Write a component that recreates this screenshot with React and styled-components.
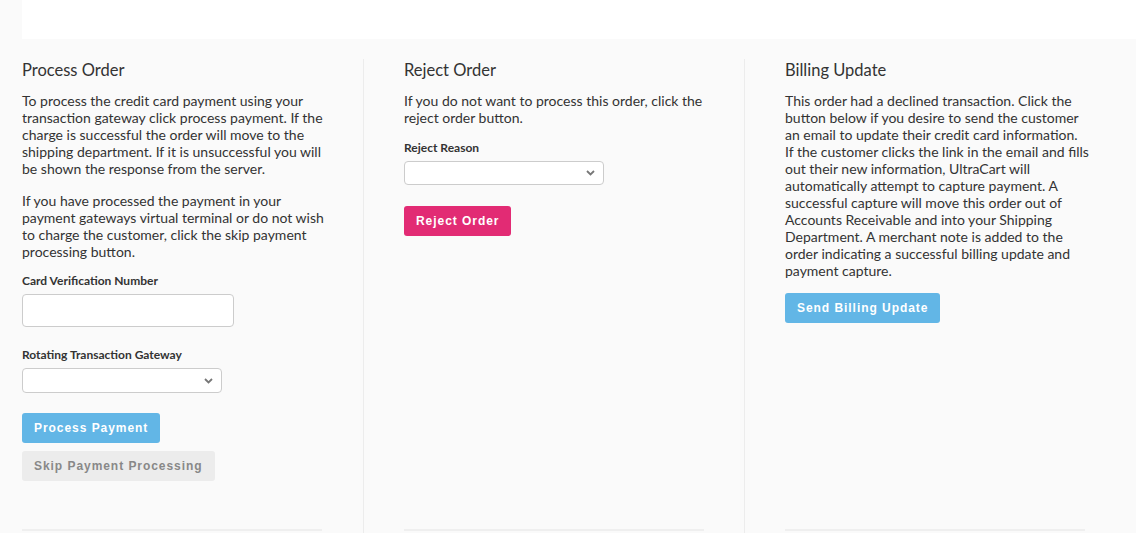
import React from 'react';
import styled, { createGlobalStyle } from 'styled-components';

const GlobalStyle = createGlobalStyle`
  html, body {
    margin: 0;
    padding: 0;
    background: #fafafa;
    font-family: Lato, "Open Sans", sans-serif;
    color: #333;
  }
`;

const Page = styled.div`
  padding: 0 0 0 22px;
  height: 533px;
  overflow: hidden;
`;

const TopBar = styled.div`
  height: 39px;
  background: #fff;
  margin-bottom: 20px;
`;

const Columns = styled.div`
  display: grid;
  grid-template-columns: 341px 381px 381px;
`;

const Column = styled.div`
  box-sizing: border-box;
  padding: ${p => (p.$first ? '0 36px 0 0' : '0 36px 0 40px')};
  border-left: ${p => (p.$first ? 'none' : '1px solid #ececec')};
  height: 474px;
  display: flex;
  flex-direction: column;
`;

const Heading = styled.h3`
  margin: 0 0 11px;
  font-size: 16.5px;
  font-weight: 400;
  line-height: 22px;
  color: #333;
`;

const Text = styled.p`
  margin: 0 0 ${p => p.$mb ?? 15}px;
  font-size: 14px;
  line-height: 17px;
  color: #333;
`;

const Label = styled.label`
  display: block;
  margin: 0 0 6px;
  font-size: 12px;
  font-weight: 700;
  line-height: 15px;
  color: #333;
`;

const Input = styled.input`
  display: block;
  box-sizing: border-box;
  width: 212px;
  height: 33px;
  border: 1px solid #ccc;
  border-radius: 4px;
  background: #fff;
  margin: 0 0 20px;
`;

const SelectWrap = styled.div`
  position: relative;
  width: 200px;
  margin: 0 0 ${p => p.$mb ?? 20}px;
`;

const Select = styled.select`
  display: block;
  box-sizing: border-box;
  width: 200px;
  height: ${p => p.$h || 25}px;
  border: 1px solid #ccc;
  border-radius: 4px;
  background: #fff;
  appearance: none;
  -webkit-appearance: none;
`;

const Chevron = styled.svg`
  position: absolute;
  right: 9px;
  top: 50%;
  margin-top: -3px;
  pointer-events: none;
`;

const COLORS = {
  blue: { bg: '#62b6e6', fg: '#fff' },
  pink: { bg: '#e22b74', fg: '#fff' },
  gray: { bg: '#ececec', fg: '#888' },
};

const Button = styled.button`
  align-self: flex-start;
  height: 30px;
  padding: 0 12px;
  border: none;
  border-radius: 3px;
  background: ${p => COLORS[p.$kind].bg};
  color: ${p => COLORS[p.$kind].fg};
  font-family: "Liberation Sans", Arial, sans-serif;
  font-weight: 700;
  font-size: 12px;
  letter-spacing: 0.95px;
  margin-bottom: 8px;
  cursor: pointer;
`;

const Spacer = styled.div`
  flex: 1;
`;

const Rule = styled.hr`
  width: 300px;
  margin: 0 0 2px;
  border: none;
  border-top: 2px solid #efefef;
`;

const Dropdown = ({ h, mb }) => (
  <SelectWrap $mb={mb}>
    <Select $h={h}>
      <option></option>
    </Select>
    <Chevron width="9" height="6" viewBox="0 0 9 6">
      <path d="M1 1l3.5 3.5L8 1" fill="none" stroke="#777" strokeWidth="1.8" />
    </Chevron>
  </SelectWrap>
);

const App = () => (
  <>
    <GlobalStyle />
    <Page>
      <TopBar />
      <Columns>
        <Column $first>
          <Heading>Process Order</Heading>
          <Text>
            To process the credit card payment using your transaction gateway click process payment. If the
            charge is successful the order will move to the shipping department. If it is unsuccessful you will
            be shown the response from the server.
          </Text>
          <Text $mb={13}>
            If you have processed the payment in your payment gateways virtual terminal or do not wish to charge
            the customer, click the skip payment processing button.
          </Text>
          <Label>Card Verification Number</Label>
          <Input type="text" />
          <Label>Rotating Transaction Gateway</Label>
          <Dropdown h={25} />
          <Button $kind="blue">Process Payment</Button>
          <Button $kind="gray">Skip Payment Processing</Button>
          <Spacer />
          <Rule />
        </Column>
        <Column>
          <Heading>Reject Order</Heading>
          <Text $mb={14}>If you do not want to process this order, click the reject order button.</Text>
          <Label>Reject Reason</Label>
          <Dropdown h={24} mb={21} />
          <Button $kind="pink">Reject Order</Button>
          <Spacer />
          <Rule />
        </Column>
        <Column>
          <Heading>Billing Update</Heading>
          <Text $mb={14}>
            This order had a declined transaction. Click the button below if you desire to send the customer an
            email to update their credit card information. If the customer clicks the link in the email and fills
            out their new information, UltraCart will automatically attempt to capture payment. A successful
            capture will move this order out of Accounts Receivable and into your Shipping Department. A merchant
            note is added to the order indicating a successful billing update and payment capture.
          </Text>
          <Button $kind="blue">Send Billing Update</Button>
          <Spacer />
          <Rule />
        </Column>
      </Columns>
    </Page>
  </>
);

export default App;
